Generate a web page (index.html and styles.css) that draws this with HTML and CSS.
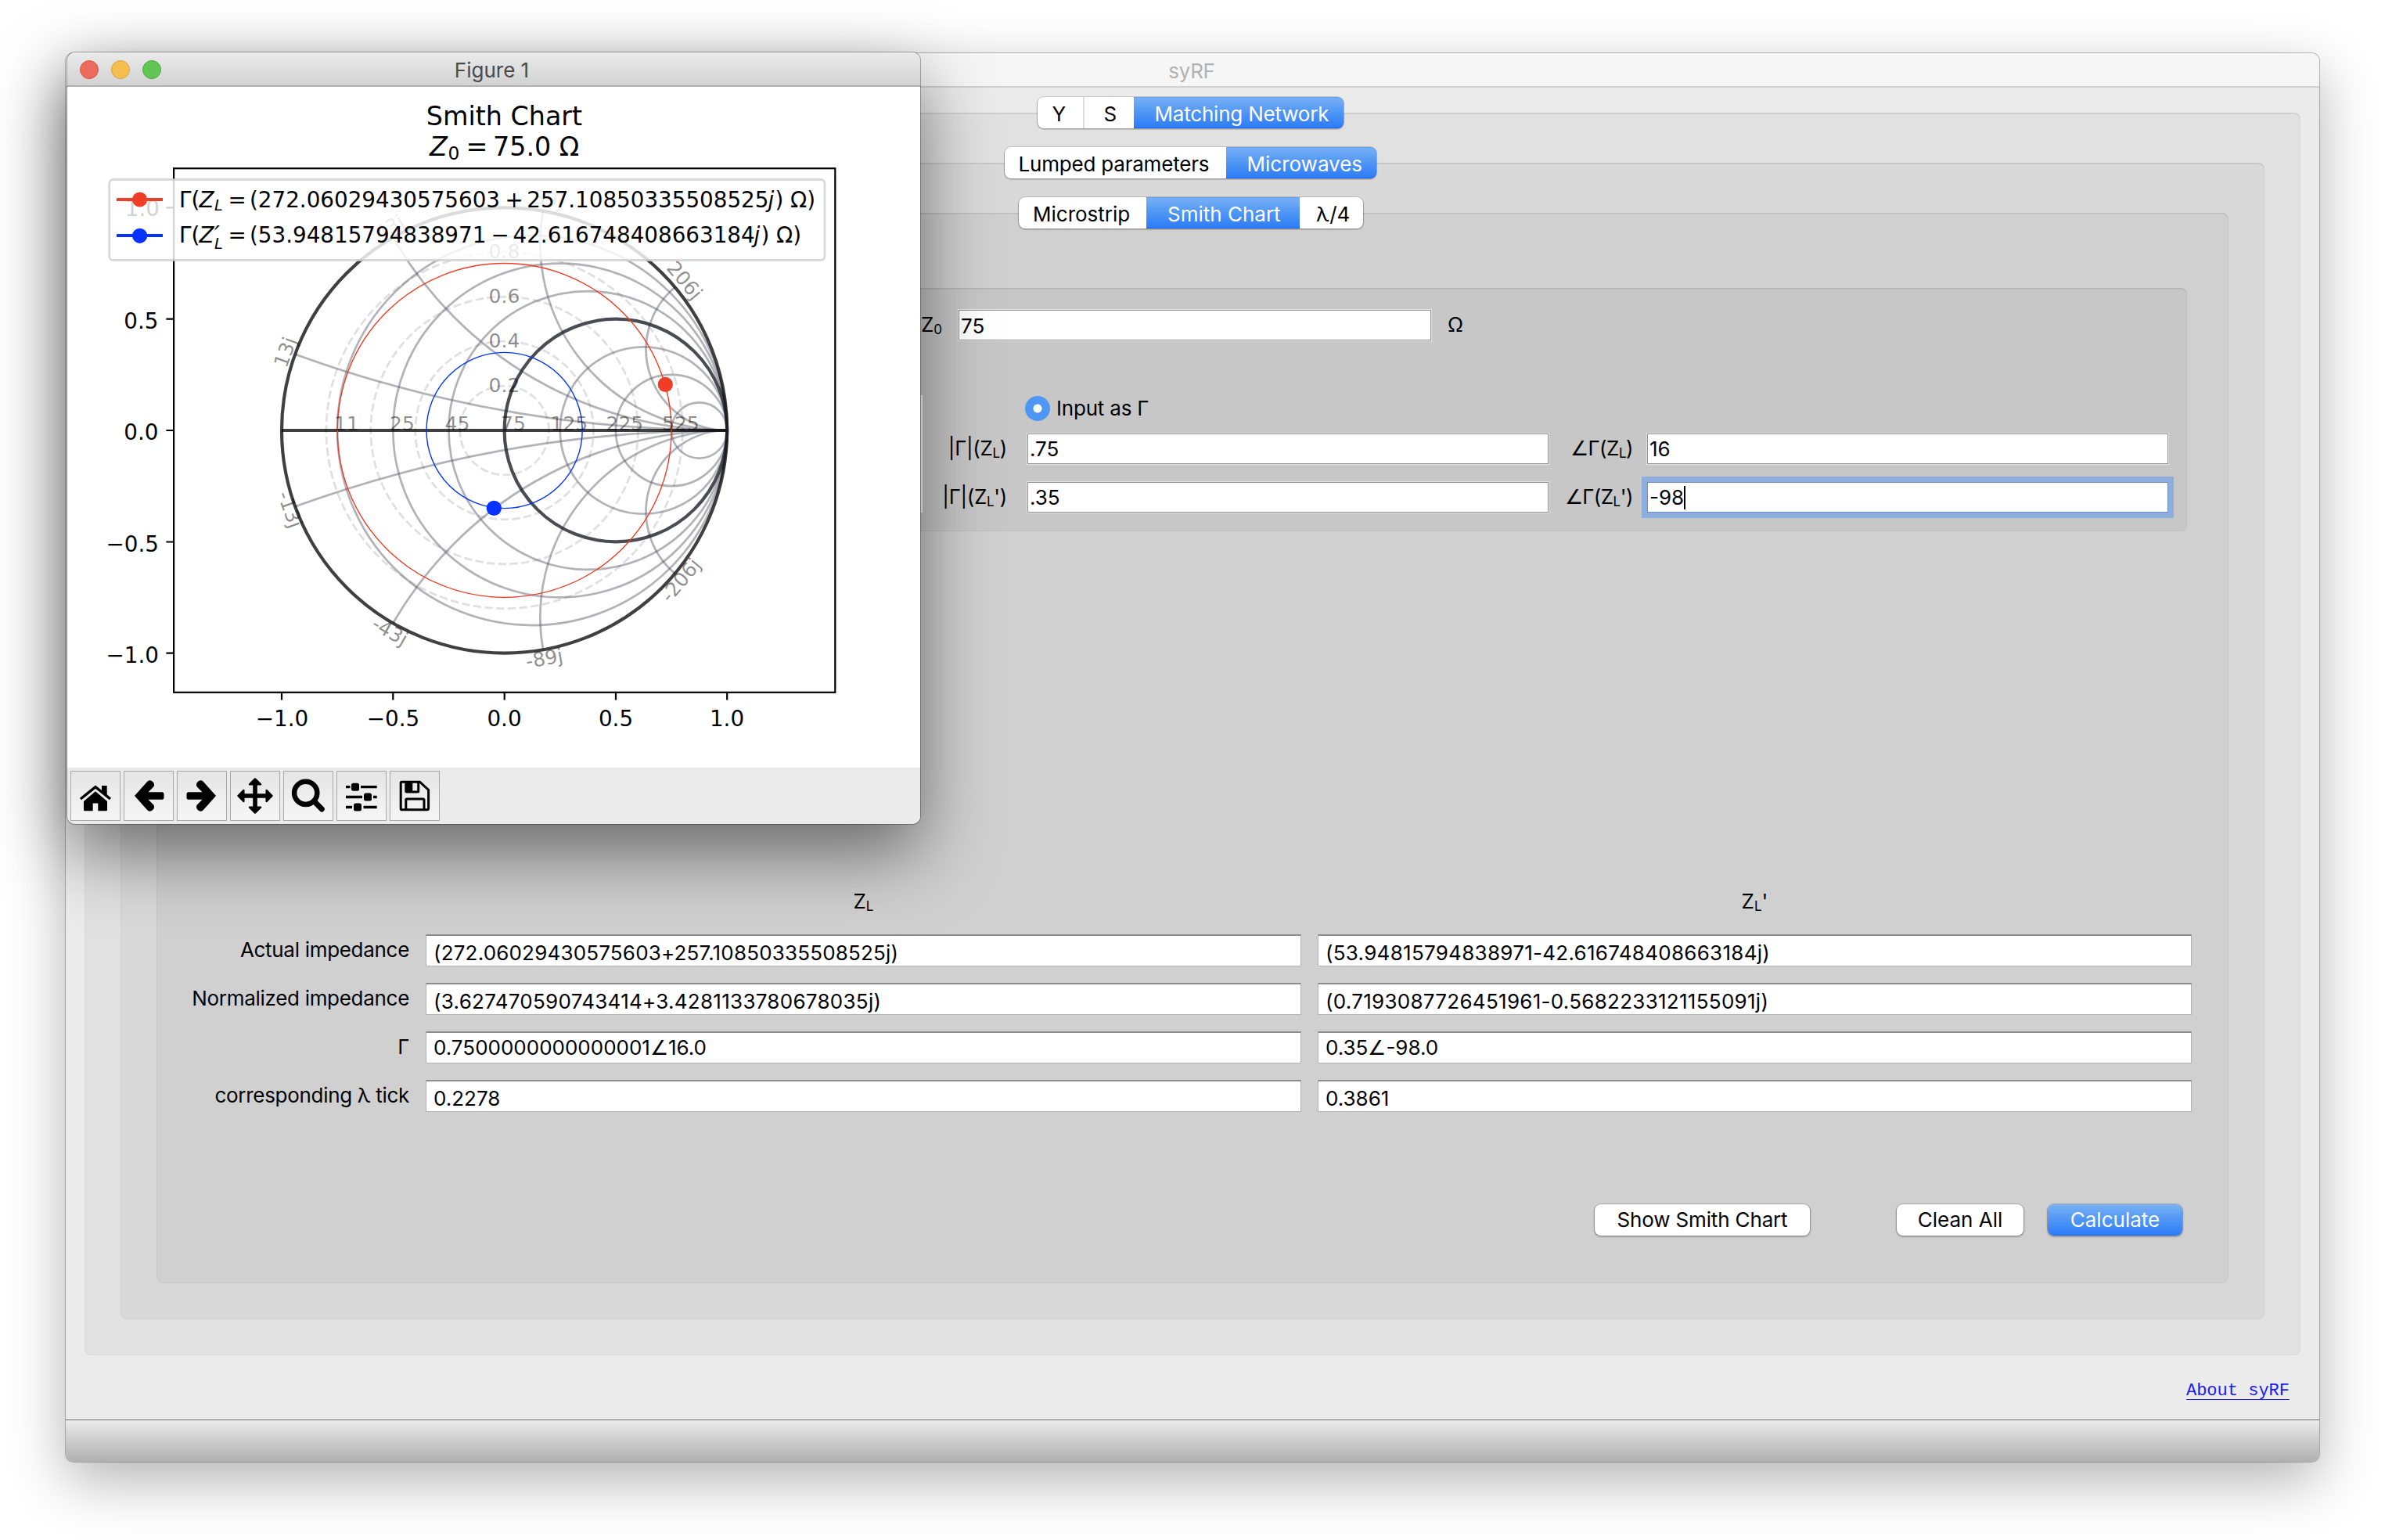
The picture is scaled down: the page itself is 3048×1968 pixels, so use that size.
FILE: index.html
```html
<!DOCTYPE html>
<html lang="en">
<head>
<meta charset="utf-8">
<title>syRF</title>
<link rel="stylesheet" href="styles.css">
</head>
<body>
<main class="desktop">

  <section class="window app">
    <header class="titlebar">syRF</header>
    <div class="app-body">
      <div class="panel panel-1">
        <nav class="tabs">
          <span class="tab tab-y">Y</span><span class="tab tab-s">S</span><span class="tab tab-match active">Matching Network</span>
        </nav>
        <div class="panel panel-2">
          <nav class="tabs">
            <span class="tab tab-lumped">Lumped parameters</span><span class="tab tab-micro active">Microwaves</span>
          </nav>
          <div class="panel panel-3">
            <nav class="tabs tabs-inner">
              <span class="tab tab-strip">Microstrip</span><span class="tab tab-smith active">Smith Chart</span><span class="tab tab-quarter">λ/4</span>
            </nav>

            <div class="panel inputs">
              <div class="z0-row">
                <label class="z0-label">Z<span class="sub">0</span></label>
                <div class="field z0-field">75</div>
                <span class="unit">Ω</span>
              </div>
              <div class="gamma">
                <div class="radio-row"><span class="radio"></span><span class="radio-text">Input as Γ</span></div>
                <div class="gamma-grid">
                  <label>|Γ|(Z<span class="sub">L</span>)</label><div class="field">.75</div>
                  <label class="angle">∠Γ(Z<span class="sub">L</span>)</label><div class="field">16</div>
                  <label>|Γ|(Z<span class="sub">L</span>')</label><div class="field">.35</div>
                  <label class="angle">∠Γ(Z<span class="sub">L</span>')</label><div class="field focused">-98<span class="caret"></span></div>
                </div>
              </div>
            </div>

            <div class="results">
              <span></span>
              <div class="col-head">Z<span class="sub">L</span></div>
              <div class="col-head">Z<span class="sub">L</span>'</div>
              <label>Actual impedance</label>
              <div class="output n1">(272.06029430575603+257.10850335508525j)</div>
              <div class="output n2">(53.94815794838971-42.616748408663184j)</div>
              <label>Normalized impedance</label>
              <div class="output n2">(3.627470590743414+3.4281133780678035j)</div>
              <div class="output n2">(0.7193087726451961-0.5682233121155091j)</div>
              <label>Γ</label>
              <div class="output raised">0.7500000000000001∠16.0</div>
              <div class="output raised">0.35∠-98.0</div>
              <label>corresponding λ tick</label>
              <div class="output">0.2278</div>
              <div class="output">0.3861</div>
            </div>

            <div class="actions">
              <button class="btn btn-show">Show Smith Chart</button>
              <button class="btn btn-clean">Clean All</button>
              <button class="btn btn-calc primary">Calculate</button>
            </div>
          </div>
        </div>
      </div>
      <div class="about"><a class="about-link">About syRF</a></div>
    </div>
    <footer class="statusbar"></footer>
  </section>

  <section class="window figure">
    <header class="titlebar figure-title">
      <span class="lights"><i class="light red"></i><i class="light yellow"></i><i class="light green"></i></span>
      <span>Figure 1</span>
    </header>
    <svg class="chart" width="1090" height="870" viewBox="86 111 1090 870">
      <g class="axis-text" text-anchor="end">
        <text x="204" y="275.7">1.0</text>
        <text x="202.5" y="419.500">0.5</text>
        <text x="202.5" y="561.500">0.0</text>
        <text x="203" y="704.500">−0.5</text>
        <text x="203" y="847">−1.0</text>
      </g>
      <g class="axis-text" text-anchor="middle">
        <text x="360.5" y="928">−1.0</text>
        <text x="502.5" y="928">−0.5</text>
        <text x="644.5" y="928">0.0</text>
        <text x="787" y="928">0.5</text>
        <text x="929" y="928">1.0</text>
      </g>
      <g class="title-text">
        <text x="644.5" y="159.5" text-anchor="middle">Smith Chart</text>
        <text x="549" y="199" class="it">Z</text>
        <text x="572.5" y="204" class="title-sub">0</text>
        <text x="595.5" y="199">=</text>
        <text x="630" y="199">75.0 Ω</text>
      </g>

      <g class="grid" transform="translate(644.6 550) scale(284.6 -284.6)">
        <g class="dashed">
          <circle r=".2"/><circle r=".4"/><circle r=".6"/><circle r=".8"/>
        </g>
        <g class="thin">
          <circle cx=".125" r=".875"/><circle cx=".25" r=".75"/><circle cx=".375" r=".625"/>
          <circle cx=".625" r=".375"/><circle cx=".75" r=".25"/><circle cx=".875" r=".125"/>
          <path d="M1 0A5.6713 5.6713 0 0 0 -.9397 .342"/>
          <path d="M1 0A5.6713 5.6713 0 0 1 -.9397 -.342"/>
          <path d="M1 0A1.73205 1.73205 0 0 0 -.5 .866"/>
          <path d="M1 0A1.73205 1.73205 0 0 1 -.5 -.866"/>
          <path d="M1 0A.8391 .8391 0 0 0 .1736 .9848"/>
          <path d="M1 0A.8391 .8391 0 0 1 .1736 -.9848"/>
          <path d="M1 0A.36397 .36397 0 0 0 .766 .6428"/>
          <path d="M1 0A.36397 .36397 0 0 1 .766 -.6428"/>
        </g>
        <circle class="outer" r="1"/>
        <path class="outer" d="M-1 0H1"/>
        <circle class="unit-r" cx=".5" r=".5"/>
        <circle class="gamma-red" r=".75"/>
        <circle class="gamma-blue" r=".35"/>
      </g>

      <g class="grid-text">
        <text x="427" y="549.5">11</text><text x="498" y="549.5">25</text><text x="568.5" y="549.5">45</text>
        <text x="640" y="549.5">75</text><text x="703.5" y="549.5">125</text><text x="774.5" y="549.5">225</text><text x="846" y="549.5">525</text>
        <g text-anchor="middle">
          <text x="644.5" y="329.5">0.8</text><text x="644.5" y="386.5">0.6</text>
          <text x="644.5" y="443.5">0.4</text><text x="644.5" y="500.5">0.2</text>
          <text transform="translate(367 451) rotate(-70)" dy="6">13j</text>
          <text transform="translate(368 652) rotate(70)" dy="6">-13j</text>
          <text transform="translate(499 293) rotate(-30)" dy="6">43j</text>
          <text transform="translate(497 809) rotate(30)" dy="6">-43j</text>
          <text transform="translate(700 257) rotate(10)" dy="6">89j</text>
          <text transform="translate(696 844) rotate(-10)" dy="6">-89j</text>
          <text transform="translate(873 360) rotate(50)" dy="6">206j</text>
          <text transform="translate(872 743) rotate(-50)" dy="6">-206j</text>
        </g>
      </g>
      <circle class="fill-red" cx="850.3" cy="491.4" r="9.6"/>
      <circle class="fill-blue" cx="631.3" cy="649.4" r="9.6"/>

      <g class="axes">
        <rect x="222.1" y="215.2" width="845.2" height="669.6"/>
        <path d="M212.4 265.4h9.7M212.4 407.7h9.7M212.4 550h9.7M212.4 692.5h9.7M212.4 834.7h9.7"/>
        <path d="M360 884.8v9.7M502.3 884.8v9.7M644.7 884.8v9.7M787 884.8v9.7M929.2 884.8v9.7"/>
      </g>

      <rect class="legend" x="139.7" y="229.5" width="914.3" height="103" rx="5"/>
      <path class="key key-red" d="M149 255h59"/><circle class="fill-red" cx="178.6" cy="255" r="9.6"/>
      <path class="key key-blue" d="M149 301h59"/><circle class="fill-blue" cx="178.6" cy="301.3" r="9.6"/>
      <g class="legend-text">
        <text x="229" y="265">Γ(<tspan x="254.5" class="it">Z</tspan><tspan x="274" y="269" class="it small">L</tspan><tspan x="291.5" y="265">=</tspan><tspan x="319">(272.06029430575603</tspan><tspan x="645.5">+</tspan><tspan x="673.3">257.10850335508525</tspan><tspan x="981.5" class="it">j</tspan><tspan x="990.5">)</tspan><tspan x="1010">Ω)</tspan></text>
        <text x="229" y="310">Γ(<tspan x="254.5" class="it">Z</tspan><tspan x="274" y="310" class="it prime">′</tspan><tspan x="274" y="318" class="it small">L</tspan><tspan x="291.5" y="310">=</tspan><tspan x="319">(53.94815794838971</tspan><tspan x="627.5">−</tspan><tspan x="655.5">42.616748408663184</tspan><tspan x="963.5" class="it">j</tspan><tspan x="972.5">)</tspan><tspan x="992">Ω)</tspan></text>
      </g>
    </svg>
    <div class="toolbar">
      <span class="tool"><svg viewBox="0 0 64 64"><path class="ln" stroke-width="3.4" d="M13 36L32 20.7L51 36"/><path d="M40 19h6.7v15l-6.700-5.500z"/><path d="M17 50V39L32 26.300L47 39V50q0 1.300-1.300 1.300H35.300V41.500H28.700V51.300H18.300Q17 51.300 17 50z"/></svg></span>
      <span class="tool"><svg viewBox="0 0 64 64"><path d="M14 32L30.500 13.500q3.500-2.600 6.700.4q3.200 3 1 6.600L31.500 27.300H49q2.500 0 2.500 2.500v4.500q0 2.500-2.500 2.500H31.500L38.200 43.500q2.200 3.600-1 6.600q-3.200 3-6.700.4z"/></svg></span>
      <span class="tool"><svg viewBox="0 0 64 64"><path d="M50 32L33.500 13.500q-3.500-2.600-6.700.4q-3.200 3-1 6.600L32.500 27.300H15q-2.500 0-2.500 2.500v4.500q0 2.500 2.500 2.500H32.500L25.800 43.500q-2.200 3.600 1 6.600q3.200 3 6.700.4z"/></svg></span>
      <span class="tool"><svg viewBox="0 0 64 64"><path class="ln" stroke-width="5.600" d="M14 32H50M32 14V50"/><path class="tip" d="M32 10.500L39 17.300H25zM32 53.500L39 46.700H25zM10.500 32L17.300 25V39zM53.500 32L46.700 25V39z"/></svg></span>
      <span class="tool"><svg viewBox="0 0 64 64"><circle class="ln" stroke-width="6.500" cx="28.700" cy="28.300" r="14.600"/><path class="ln round" stroke-width="7" d="M40 39.500L49.300 49"/></svg></span>
      <span class="tool"><svg viewBox="0 0 64 64"><path class="ln" stroke-width="3.300" d="M12 20.700h5.500M31 20.700h20.700M12 33.500h21M47 33.500h4.700M12 46.500h8M34.500 46.500h17.200"/><rect x="19" y="15.700" width="10" height="10" rx="2.500"/><rect x="35" y="28.500" width="10" height="10" rx="2.500"/><rect x="22" y="41.500" width="10" height="10" rx="2.500"/></svg></span>
      <span class="tool"><svg viewBox="0 0 64 64"><path class="ln" stroke-width="3" d="M15.500 14.200H38.500L49.600 24.500V48q0 1.700-1.700 1.700H15.500q-1.300 0-1.300-1.300V15.500q0-1.300 1.300-1.300z"/><path class="ln" stroke-width="3" d="M20.800 14v12q0 1 1 1H35.700q1 0 1-1V14"/><path d="M20.800 14.500h8.500v12h-8.500z"/><path class="ln" stroke-width="3" d="M20.800 49.500V37q0-1 1-1H42.500q1.500 0 1.500 1V49.500"/></svg></span>
    </div>
  </section>

</main>
</body>
</html>
```
FILE: styles.css
```css
* { box-sizing: border-box; }

body {
  margin: 0;
  background: #fff;
  font-family: Inter, "Noto Sans", sans-serif;
  font-size: 26px;
  color: #000;
}

.desktop {
  position: relative;
  width: 3048px;
  height: 1968px;
  overflow: hidden;
}

.window {
  position: absolute;
  display: flex;
  flex-direction: column;
}

.app {
  left: 84px;
  top: 68px;
  width: 2880px;
  height: 1800px;
  background: #ebebeb;
  border-radius: 10px;
  box-shadow: 0 0 0 1px rgba(0, 0, 0, .25), 0 24px 72px rgba(0, 0, 0, .3);
}

.figure {
  left: 86px;
  top: 67px;
  width: 1090px;
  height: 986px;
  background: #fff;
  border-radius: 10px;
  box-shadow: 0 0 0 1px rgba(0, 0, 0, .3), 0 36px 92px rgba(0, 0, 0, .5);
}

.titlebar {
  display: flex;
  flex: none;
  align-items: center;
  justify-content: center;
  height: 44px;
  padding: 2px 2px 0 0;
  background: #f6f6f6;
  border-bottom: 2px solid #d0d0d0;
  border-radius: 10px 10px 0 0;
  color: #b2b2b2;
  letter-spacing: -.3px;
}

.figure-title {
  position: relative;
  padding-right: 5px;
  background: linear-gradient(#ebebeb, #d2d2d2);
  border-bottom-color: #b1b1b1;
  color: #4a4a4a;
  letter-spacing: 0;
}

.lights {
  position: absolute;
  left: 16px;
  top: 10px;
  display: flex;
  gap: 16px;
}

.light {
  width: 24px;
  height: 24px;
  border-radius: 50%;
}
.red { background: #ed6a5e; border: 1px solid #d5564a; }
.yellow { background: #f5bf4f; border: 1px solid #d8a13c; }
.green { background: #61c654; border: 1px solid #4fa73f; }

.app-body {
  display: flex;
  flex: 1;
  flex-direction: column;
  padding: 32px 24px 0;
}

.panel {
  display: flex;
  flex-direction: column;
  border-radius: 8px;
  box-shadow: inset 0 2px 0 rgba(0, 0, 0, .06), inset 0 0 0 1px rgba(0, 0, 0, .03);
}
.panel-1 { height: 1588px; padding: 0 46px 46px; background: #e1e1e1; }
.panel-2 { flex: 1; margin-top: 44px; padding: 0 46px 46px; background: #d9d9d9; }
.panel-3 { flex: 1; margin-top: 44px; background: #d0d0d0; }

.tabs {
  display: flex;
  align-self: center;
  height: 40px;
  margin: -20px 6px 0 0;
  border-radius: 8px;
  background: #fff;
  box-shadow: 0 0 0 1px rgba(0, 0, 0, .14), 0 1px 1px 1px rgba(0, 0, 0, .16);
}
.tabs-inner { margin-right: 4px; }
.tab {
  display: flex;
  align-items: center;
  height: 40px;
  padding-top: 2px;
  white-space: nowrap;
}
.tab:first-child { border-radius: 8px 0 0 8px; }
.tab:last-child { border-radius: 0 8px 8px 0; }
.active {
  background: linear-gradient(#7ab1f6, #5398f4 45%, #2a7bf8);
  box-shadow: inset 0 1px 0 #5f9ff0, inset 0 -1px 0 #1d63f0;
  color: #fff;
}
.tab-y { width: 60px; padding-left: 19px; border-right: 2px solid #ddd; }
.tab-s { width: 63px; padding-left: 25px; }
.tab-match { width: 268px; padding-left: 27px; letter-spacing: -.2px; }
.tab-lumped { width: 283px; padding-left: 18px; letter-spacing: -.2px; }
.tab-micro { width: 192px; padding-left: 27px; }
.tab-strip { width: 163px; padding-left: 18px; }
.tab-smith { width: 196px; padding-left: 27px; }
.tab-quarter { width: 81px; padding-left: 21px; }

.inputs {
  height: 311px;
  margin: 76px 53px 0 52px;
  background: #c7c7c7;
}

.z0-row {
  display: flex;
  align-items: center;
  margin: 27px 0 0 925px;
}
.z0-label { width: 47px; padding-bottom: 2px; }
.unit { margin-left: 20px; padding-bottom: 2px; }

.sub {
  font-size: 17px;
  line-height: 0;
  vertical-align: -3px;
}

.field {
  display: flex;
  align-items: center;
  height: 41px;
  padding: 1px 0 0 3px;
  border: 1px solid #e2e2e2;
  background: #fff;
  box-shadow: inset 0 0 0 1px #929292;
}
.z0-field { width: 606px; margin-bottom: -1px; }

.gamma {
  width: 1600px;
  height: 150px;
  margin: 70px 0 0 925px;
  border-left: 2px solid #fff;
}
.radio-row {
  display: flex;
  align-items: center;
  gap: 8px;
  height: 34px;
  padding-left: 131px;
}
.radio {
  width: 32px;
  height: 32px;
  border-radius: 50%;
  background: radial-gradient(circle, #fff 5px, #4f97f5 6px);
}
.radio-text { padding-bottom: 2px; letter-spacing: -.2px; }
.gamma-grid {
  display: grid;
  grid-template-columns: 108px 25px 668px 107px 17px 668px;
  grid-template-rows: 40px 40px;
  row-gap: 22px;
  align-items: center;
  padding-top: 14px;
}
.gamma-grid label {
  grid-column: 1;
  padding-bottom: 1px;
  text-align: right;
  white-space: nowrap;
  letter-spacing: -.3px;
}
.gamma-grid label + .field { grid-column: 3; }
.gamma-grid label.angle { grid-column: 4; letter-spacing: -.5px; }
.gamma-grid label.angle + .field { grid-column: 6; }

.gamma-grid .focused {
  border-color: #8eaedd;
  box-shadow: inset 0 0 0 1px #6f8fc4, 0 0 0 6px #8eaedd;
}
.caret { width: 2px; height: 30px; background: #000; }

.results {
  display: grid;
  grid-template-columns: 323px 1119px 1117px;
  grid-auto-rows: 40px;
  gap: 22px 21px;
  align-items: center;
  margin-top: 453px;
}
.results label {
  padding-bottom: 2px;
  text-align: right;
  white-space: nowrap;
  letter-spacing: -.3px;
}
.col-head { padding-bottom: 1px; text-align: center; }
.output {
  height: 41px;
  padding: 6px 0 0 9px;
  background: #fff;
  border: 1px solid #b2b2b2;
  border-top: 2px solid #8c8c8c;
  line-height: 32px;
  white-space: nowrap;
}
.n1 { letter-spacing: .18px; }
.n2 { letter-spacing: .28px; }
.raised { padding-top: 3px; }

.actions {
  display: flex;
  justify-content: flex-end;
  margin-top: 119px;
  padding-right: 59px;
}
.btn {
  height: 40px;
  padding: 0 0 2px;
  border: 0;
  border-radius: 8px;
  background: #fff;
  box-shadow: 0 0 0 1px rgba(0, 0, 0, .14), 0 1px 2px 1px rgba(0, 0, 0, .22);
  font: inherit;
  color: #000;
}
.btn-show { width: 275px; margin-right: 111px; letter-spacing: -.15px; }
.btn-clean { width: 162px; margin-right: 31px; }
.btn-calc { width: 172px; }
.primary {
  background: linear-gradient(#7ab1f6, #5398f4 45%, #2a7bf8);
  color: #fff;
}

.about {
  display: flex;
  justify-content: flex-end;
  margin-top: 35px;
  padding-right: 14px;
}
.about-link {
  font: 22px/21px "Courier New", "Liberation Mono", monospace;
  color: #1a1aff;
  border-bottom: 1px solid #1a1aff;
}

.statusbar {
  height: 54px;
  border-top: 1px solid #6e6e6e;
  border-radius: 0 0 10px 10px;
  background: linear-gradient(#ebebeb, #cfcfcf 45%, #b0b0b0);
}

.chart { display: block; flex: none; font-family: "DejaVu Sans", sans-serif; }
.axis-text, .legend-text { font-size: 27.78px; }
.title-text { font-size: 33.33px; }
.title-sub { font-size: 23.33px; }
.small { font-size: 19.4px; }
.prime { font-size: 31px; }
.it { font-style: italic; }
.grid-text { font-size: 25px; fill: #000; fill-opacity: .45; }
.grid circle, .grid path { fill: none; vector-effect: non-scaling-stroke; }
.dashed circle { stroke: #e0e0e0; stroke-width: 2.78px; stroke-dasharray: 10.3 4.45; }
.thin circle, .thin path { stroke: #555564; stroke-opacity: .45; stroke-width: 2.7px; }
.grid .outer { stroke: #000; stroke-opacity: .75; stroke-width: 4.17px; }
.grid .unit-r { stroke: #1e1e28; stroke-opacity: .8; stroke-width: 4.17px; }
.grid .gamma-red { stroke: #ee3e26; stroke-width: 1.4px; }
.grid .gamma-blue { stroke: #0433ff; stroke-width: 1.4px; }
.fill-red { fill: #ee3e26; }
.fill-blue { fill: #0433ff; }
.axes { fill: none; stroke: #000; stroke-width: 2.22px; }
.legend { fill: #fff; fill-opacity: .82; stroke: #ccc; stroke-opacity: .75; stroke-width: 2.78px; }
.key { stroke-width: 4.17px; }
.key-red { stroke: #ee3e26; }
.key-blue { stroke: #0433ff; }

.toolbar {
  display: flex;
  flex: 1;
  gap: 4px;
  padding: 4px 0 0 4px;
  background: #ebebeb;
  border-radius: 0 0 10px 10px;
}
.tool {
  width: 64px;
  height: 64px;
  border: 1px solid #a9a9a9;
  background: linear-gradient(#e5e5e5, #f6f6f6);
}
.tool svg { display: block; width: 64px; height: 64px; margin: -1px; }
.ln { fill: none; stroke: #000; }
.round { stroke-linecap: round; }
.tip { stroke: #000; stroke-width: 2.5px; stroke-linejoin: round; }
```
